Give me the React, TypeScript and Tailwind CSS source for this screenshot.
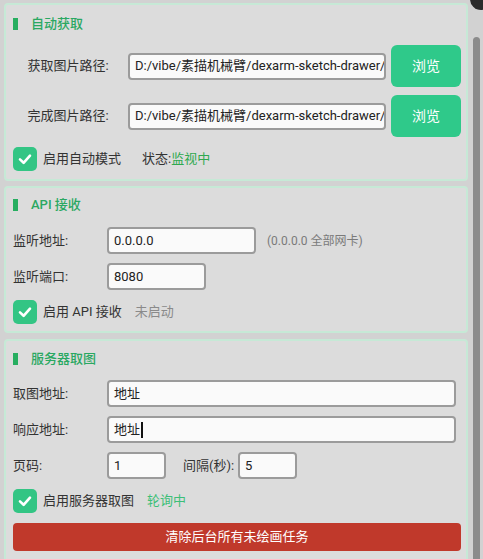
import React from 'react';

const Check = () => (
  <div className="flex h-[24px] w-[24px] shrink-0 items-center justify-center rounded-[5px] bg-[#33c584]">
    <svg width="16" height="16" viewBox="0 0 16 16" fill="none">
      <path d="M3 8.4 L6.6 11.8 L13 4.6" stroke="#fff" strokeWidth="2.6" strokeLinecap="round" strokeLinejoin="round" />
    </svg>
  </div>
);

const Header = ({ title }: { title: string }) => (
  <div className="flex h-[20px] items-center">
    <div className="h-[12px] w-[5px] bg-[#27ae60]" />
    <span className="ml-[13px] font-medium text-[#2aa862]">{title}</span>
  </div>
);

const Field = ({ value, className, caret }: { value: string; className: string; caret?: boolean }) => (
  <div
    className={`flex h-[27px] items-center overflow-hidden whitespace-nowrap rounded-[4px] border-2 border-[#9b9b9b] bg-[#fafafa] pl-[5px] text-[#222] ${className}`}
  >
    {value}
    {caret && <span className="ml-[1px] h-[16px] w-[2px] bg-[#111]" />}
  </div>
);

const Browse = () => (
  <button className="ml-[5px] h-[42px] w-[70px] shrink-0 rounded-[6px] bg-[#2fc98a] text-[14px] text-white">浏览</button>
);

const panel = 'rounded-[4px] border-2 border-[#c6e9d6] bg-[#dcdcdc] pl-[7px] pr-[5px]';

export default function App() {
  return (
    <div className="relative flex h-[559px] w-[483px] overflow-hidden bg-[#d2d2d2] font-['Roboto','Noto_Sans_CJK_SC',sans-serif] text-[13px] text-[#333]">
      <div className="flex w-[472px] shrink-0 flex-col px-[4px]">
        <div className="h-[2px] bg-[#c6e9d6]" />

        {/* 自动获取 */}
        <section className={`mt-[3px] pt-[9px] pb-[8px] ${panel}`}>
          <Header title="自动获取" />
          <div className="mt-[11px] flex items-center">
            <span className="w-[110px] text-center">获取图片路径:</span>
            <Field className="ml-[5px] flex-1" value="D:/vibe/素描机械臂/dexarm-sketch-drawer/" />
            <Browse />
          </div>
          <div className="mt-[8px] flex items-center">
            <span className="w-[110px] text-center">完成图片路径:</span>
            <Field className="ml-[5px] flex-1" value="D:/vibe/素描机械臂/dexarm-sketch-drawer/" />
            <Browse />
          </div>
          <div className="mt-[10px] flex items-center">
            <Check />
            <span className="ml-[6px]">启用自动模式</span>
            <span className="ml-[21px]">状态:</span>
            <span className="text-[#2fa94f]">监视中</span>
          </div>
        </section>

        {/* API 接收 */}
        <section className={`mt-[5px] pt-[7px] pb-[7px] ${panel}`}>
          <Header title="API 接收" />
          <div className="mt-[12px] flex items-center">
            <span className="w-[94px]">监听地址:</span>
            <Field className="w-[149px]" value="0.0.0.0" />
            <span className="ml-[11px] text-[12px] text-[#7a7a7a]">(0.0.0.0 全部网卡)</span>
          </div>
          <div className="mt-[9px] flex items-center">
            <span className="w-[94px]">监听端口:</span>
            <Field className="w-[99px]" value="8080" />
          </div>
          <div className="mt-[10px] flex items-center">
            <Check />
            <span className="ml-[6px]">启用 API 接收</span>
            <span className="ml-[13px] text-[#8a8a8a]">未启动</span>
          </div>
        </section>

        {/* 服务器取图 */}
        <section className={`mt-[6px] pt-[8px] pb-[10px] ${panel}`}>
          <Header title="服务器取图" />
          <div className="mt-[11px] mr-[5px] flex items-center">
            <span className="w-[94px] shrink-0">取图地址:</span>
            <Field className="flex-1" value="地址" />
          </div>
          <div className="mt-[9px] mr-[5px] flex items-center">
            <span className="w-[94px] shrink-0">响应地址:</span>
            <Field className="flex-1" value="地址" caret />
          </div>
          <div className="mt-[9px] flex items-center">
            <span className="w-[94px]">页码:</span>
            <Field className="w-[59px]" value="1" />
            <span className="ml-[17px] w-[55px]">间隔(秒):</span>
            <Field className="w-[59px]" value="5" />
          </div>
          <div className="mt-[10px] flex items-center">
            <Check />
            <span className="ml-[6px]">启用服务器取图</span>
            <span className="ml-[13px] text-[#3cbf78]">轮询中</span>
          </div>
          <button className="mt-[10px] h-[28px] w-full rounded-[4px] bg-[#c0392b] text-white">清除后台所有未绘画任务</button>
        </section>
      </div>

      {/* scrollbar */}
      <div className="flex w-[11px] flex-col">
        <div className="h-[37px] shrink-0" />
        <div className="ml-[1px] w-[7px] flex-1 rounded-t-full bg-[#8b8b8b]" />
      </div>
      <div className="absolute -top-[12px] -right-[9px] h-[22px] w-[22px] rounded-full bg-[#2b2b2b]" />
    </div>
  );
}
